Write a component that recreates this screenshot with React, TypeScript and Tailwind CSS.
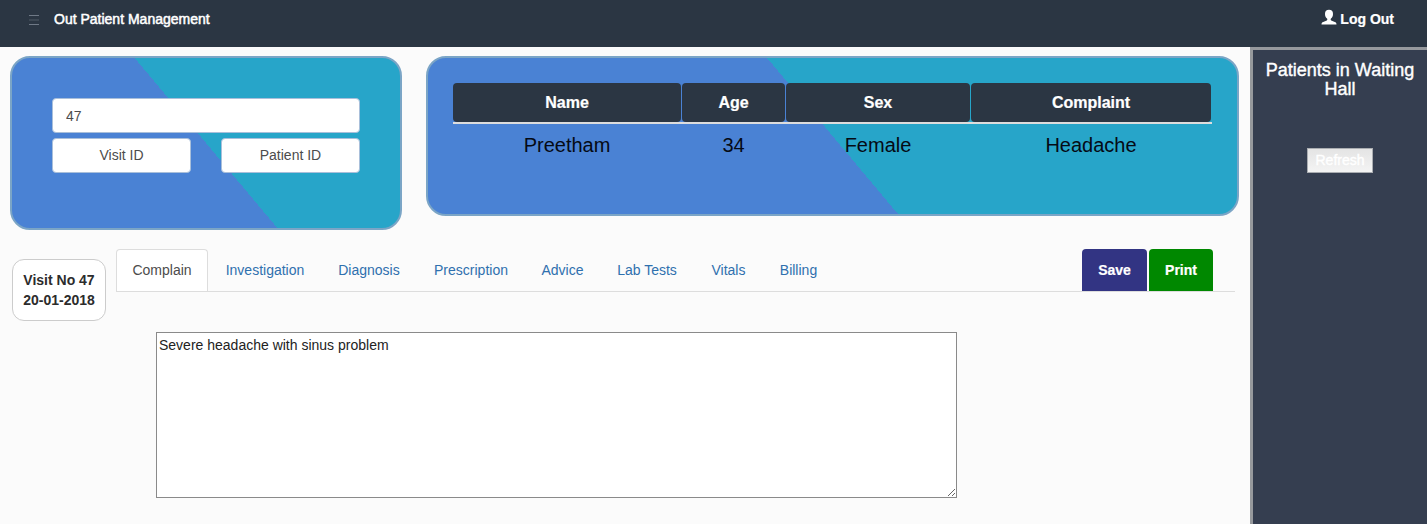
import React from 'react';

const tabs = [
  { label: 'Complain', width: 'w-[92px]' },
  { label: 'Investigation', width: 'w-[110px]' },
  { label: 'Diagnosis', width: 'w-[94px]' },
  { label: 'Prescription', width: 'w-[106px]' },
  { label: 'Advice', width: 'w-[73px]' },
  { label: 'Lab Tests', width: 'w-[92px]' },
  { label: 'Vitals', width: 'w-[67px]' },
  { label: 'Billing', width: 'w-[69px]' },
];

const columns = [
  { title: 'Name', value: 'Preetham' },
  { title: 'Age', value: '34' },
  { title: 'Sex', value: 'Female' },
  { title: 'Complaint', value: 'Headache' },
];

const cardClass =
  'rounded-[20px] border-2 border-[#7ba5c6] bg-[linear-gradient(50deg,#4a82d4_50%,#27a5c9_50%)] bg-origin-padding';

function Header() {
  return (
    <header className="flex h-[47px] items-start justify-between bg-[#2b3643] pr-[33px] pl-[29px] text-white">
      <div className="flex items-start">
        <svg width="10" height="11" viewBox="0 0 10 11" className="mt-[15px]" shapeRendering="crispEdges">
          <rect width="10" height="1" fill="#6f7986" />
          <rect y="4" width="10" height="2" fill="#3d4854" />
          <rect y="9" width="10" height="1" fill="#6f7986" />
        </svg>
        <span className="mt-[9px] ml-[15px] text-sm leading-5 [-webkit-text-stroke:0.5px_white]">
          Out Patient Management
        </span>
      </div>
      <a className="mt-[9px] flex text-sm leading-5 font-bold [-webkit-text-stroke:0.2px_white]" href="#">
        <svg width="16" height="16" viewBox="0 0 16 16" className="mr-[3px]" fill="white">
          <path d="M8 .8C5.4 .8 4 2.2 4 4.9C4 6.8 4.8 8.5 6 9.5C6.6 10.2 6.4 11 5.8 11.4L1.6 13.3C.9 13.7 .6 14.2 .5 15.5H15.5C15.4 14.2 15.1 13.7 14.4 13.3L10.2 11.4C9.6 11 9.4 10.2 10 9.5C11.2 8.5 12 6.8 12 4.9C12 2.2 10.6 .8 8 .8Z" />
        </svg>
        Log Out
      </a>
    </header>
  );
}

function SearchCard() {
  const field = 'h-[35px] rounded-[4px] border border-[#a9bfda] bg-white text-sm text-[#4c4c4c]';
  return (
    <section className={`${cardClass} h-[174px] w-[392px] px-10 pt-10`}>
      <input className={`${field} block w-[308px] px-[13px] outline-none`} defaultValue="47" />
      <div className="mt-[5px] flex w-[308px] justify-between">
        <button className={`${field} w-[139px] pb-[2px]`}>Visit ID</button>
        <button className={`${field} w-[139px] pb-[2px]`}>Patient ID</button>
      </div>
    </section>
  );
}

function PatientCard() {
  return (
    <section className={`${cardClass} h-[160px] w-[813px] px-[25px] pt-[25px]`}>
      <div className="grid w-[759px] grid-cols-[229px_104px_185px_241px] text-center">
        {columns.map((c) => (
          <div key={c.title}>
            <div className="border-b-2 border-[#ddd]">
              <div className="mr-px h-[39px] rounded-[4px] bg-[#2b3643] text-base leading-[39px] font-bold text-white [-webkit-text-stroke:0.2px_white]">
                {c.title}
              </div>
            </div>
            <div className="pt-[7px] pr-px text-[20px] leading-7 text-[#050a14]">{c.value}</div>
          </div>
        ))}
      </div>
    </section>
  );
}

function Tabs() {
  return (
    <nav className="flex h-[43px] w-[1119px] border-b border-[#ddd] text-sm">
      {tabs.map((t, i) => (
        <a
          key={t.label}
          href="#"
          className={`${t.width} mr-[2px] flex h-[42px] items-center justify-center rounded-t-[4px] ${
            i === 0
              ? 'border border-b-0 border-[#ddd] bg-white pb-px text-[#4c4c4c]'
              : 'text-[#2f70ae]'
          }`}
        >
          {t.label}
        </a>
      ))}
      <div className="mr-[22px] ml-auto flex h-[42px] gap-[2px] font-bold text-white [-webkit-text-stroke:0.2px_white]">
        <button className="w-[65px] rounded-t-[4px] bg-[#323483]">Save</button>
        <button className="w-16 rounded-t-[4px] bg-[#008800]">Print</button>
      </div>
    </nav>
  );
}

export default function App() {
  return (
    <div className="flex h-[524px] w-[1427px] flex-col overflow-hidden bg-[#fbfbfb] font-['Liberation_Sans',Arial,sans-serif]">
      <Header />
      <div className="flex flex-1">
        <main className="w-[1250px]">
          <div className="flex gap-6 pt-[9px] pl-[10px]">
            <SearchCard />
            <PatientCard />
          </div>
          <div className="mt-[19px] flex gap-[10px] pl-3">
            <div className="mt-[10px] h-[62px] w-[94px] rounded-[12px] border border-[#ccc] bg-white pt-[10px] text-center text-sm leading-5 font-bold text-[#2c2c2c]">
              <div>Visit No 47</div>
              <div>20-01-2018</div>
            </div>
            <div>
              <Tabs />
              <textarea
                className="mt-10 ml-10 block h-[166px] w-[801px] resize border border-[#8a8a8a] bg-white px-[2px] pt-[2px] text-sm leading-5 text-[#222] outline-none"
                defaultValue="Severe headache with sinus problem"
              />
            </div>
          </div>
        </main>
        <aside className="w-[177px] border-t-[3px] border-l-[3px] border-[#96999d] bg-[#353e50] pt-[10px] text-center text-white">
          <h4 className="px-2 pt-px text-[18px] leading-[19px] [-webkit-text-stroke:0.4px_white]">
            Patients in Waiting Hall
          </h4>
          <button className="mt-[49px] h-[25px] w-[66px] border border-[#aaadb1] bg-linear-to-b from-[#e4e4e4] to-[#f4f4f4] pb-[2px] text-sm text-white [-webkit-text-stroke:0.4px_white]">
            Refresh
          </button>
        </aside>
      </div>
    </div>
  );
}
